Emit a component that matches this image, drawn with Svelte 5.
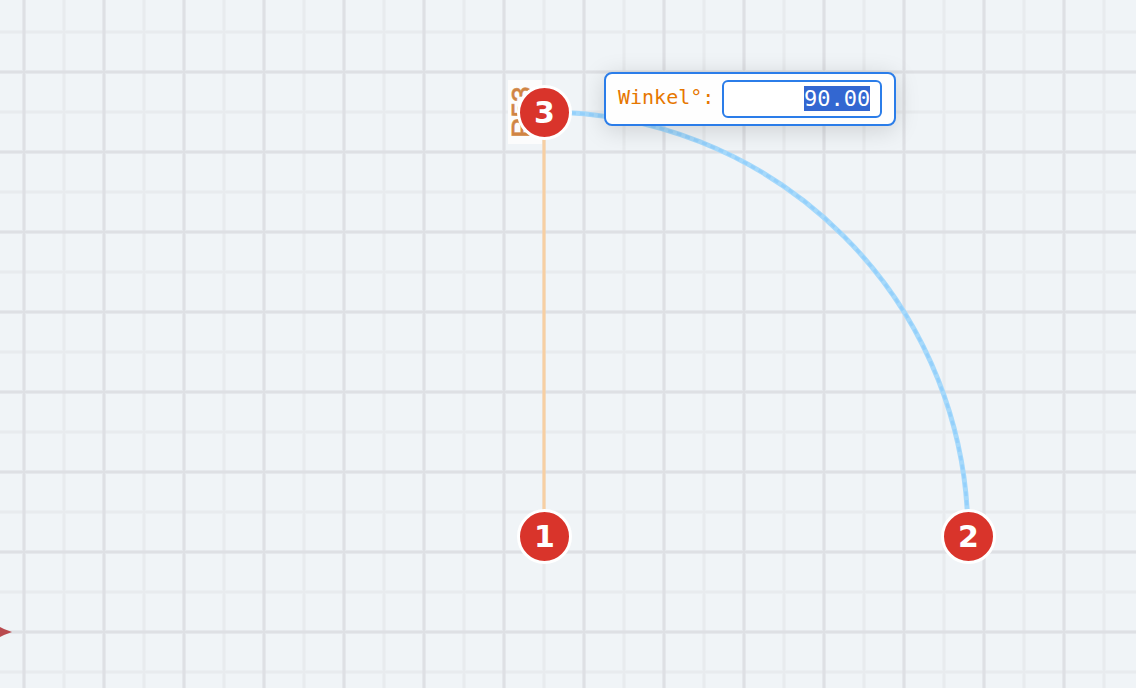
<script lang="ts">
	interface Point {
		x: number;
		y: number;
	}

	// Canvas geometry, 8 px per millimetre
	const scale = 8;
	const center: Point = { x: 544, y: 536 };
	const radius = 53;
	const r = radius * scale;
	const arc = `M${center.x} ${center.y - r}A${r} ${r} 0 0 1 ${center.x + r} ${center.y}`;

	const points: Point[] = [
		center,
		{ x: center.x + r, y: center.y },
		{ x: center.x, y: center.y - r }
	];

	let angle = $state('90.00');
	let input: HTMLInputElement;

	// Start with the value selected so typing replaces it
	$effect(() => {
		input.focus();
		input.select();
	});
</script>

<main class="canvas">
	<svg class="drawing" aria-hidden="true">
		<defs>
			<pattern id="grid" x="-16" y="32" width="80" height="80" patternUnits="userSpaceOnUse">
				<path class="minor edge" d="M0 0V80M80 0V80M0 0H80M0 80H80" />
				<path class="minor" d="M0 0V80M80 0V80M0 0H80M0 80H80" />
				<path class="major edge" d="M40 0V80M0 40H80" />
				<path class="major" d="M40 0V80M0 40H80" />
			</pattern>
		</defs>
		<rect width="100%" height="100%" fill="url(#grid)" />

		<path class="axis" d="M0 627L4 629L12 632L4 635L0 637Z" />
		<line class="radius edge" x1={center.x} y1={center.y} x2={center.x} y2={center.y - r} />
		<line class="radius" x1={center.x} y1={center.y} x2={center.x} y2={center.y - r} />
		<path class="arc" d={arc} />
		<path class="arc dots" d={arc} />

		<rect class="label-box" x="508" y="80" width="34" height="64" />
		<text class="label" transform="translate(531 112) rotate(-90)">R{radius}</text>
	</svg>

	{#each points as point, index (index)}
		<span class="marker" style="left: {point.x}px; top: {point.y}px">{index + 1}</span>
	{/each}

	<div class="angle-box">
		<label for="angle">Winkel°:</label>
		<input id="angle" type="text" bind:value={angle} bind:this={input} />
	</div>
</main>

<style>
	:global(body) {
		margin: 0;
	}

	.canvas {
		position: relative;
		height: 100vh;
		overflow: hidden;
		background: #f0f4f7;
	}

	.drawing {
		display: block;
		width: 100%;
		height: 100%;
	}

	.minor,
	.major,
	.arc {
		fill: none;
	}

	.minor {
		stroke: #e8ebee;
		stroke-width: 2;
	}

	.major {
		stroke: #dee0e4;
		stroke-width: 2;
	}

	.radius {
		stroke: #f7cfa3;
		stroke-width: 2;
	}

	/* Wider, fainter pass under each line */
	.edge {
		stroke-width: 4;
		stroke-opacity: 0.6;
	}

	.axis {
		fill: #b94a4e;
	}

	.arc {
		stroke: #a6d9fb;
		stroke-width: 5;
	}

	.dots {
		stroke: #94d0fb;
		stroke-width: 3;
		stroke-dasharray: 5 4;
	}

	.label-box {
		fill: #fcfcfc;
	}

	.label {
		fill: #d08443;
		stroke: #d08443;
		stroke-width: 1;
		stroke-opacity: 0.7;
		font: 28px 'Liberation Sans', sans-serif;
		text-anchor: middle;
	}

	.marker {
		position: absolute;
		box-sizing: border-box;
		display: flex;
		align-items: center;
		justify-content: center;
		width: 55px;
		height: 55px;
		margin: -27px 0 0 -27px;
		border: 3px solid #fff;
		border-radius: 50%;
		background: #d9342b;
		color: #fff;
		font: 700 30px 'DejaVu Sans', sans-serif;
	}

	.angle-box {
		position: absolute;
		top: 72px;
		left: 604px;
		display: flex;
		align-items: center;
		gap: 8px;
		padding: 6px 12px;
		border: 2px solid #2b7de9;
		border-radius: 8px;
		background: #fefefe;
		box-shadow: 0 4px 24px rgb(0 0 0 / 15%);
		font-family: 'DejaVu Sans Mono', monospace;
	}

	.angle-box label {
		padding-bottom: 4px;
		color: #e67700;
		font-size: 20px;
	}

	.angle-box input {
		box-sizing: border-box;
		width: 160px;
		height: 38px;
		padding: 2px 10px 4px;
		border: 2px solid #2b7de9;
		border-radius: 6px;
		outline: none;
		background: #fff;
		color: #222;
		font: 22px 'DejaVu Sans Mono', monospace;
		text-align: right;
	}

	.angle-box input::selection {
		background: #3367d1;
		color: #fff;
	}
</style>
